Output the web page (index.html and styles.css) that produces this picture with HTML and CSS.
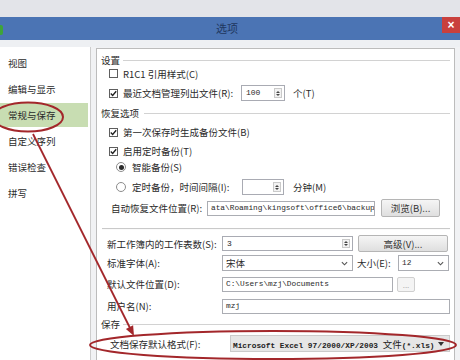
FILE: index.html
```html
<!DOCTYPE html>
<html lang="zh">
<head>
<meta charset="utf-8">
<title>选项</title>
<link rel="stylesheet" href="styles.css">
</head>
<body>
<div class="screen">
  <div class="topstrip"></div>
  <div class="titlebar">
    <span class="appicon"></span>
    <span class="title">选项</span>
    <span class="close">×</span>
  </div>
  <div class="belt"></div>
  <div class="main">
    <ul class="sidebar">
      <li>视图</li>
      <li>编辑与显示</li>
      <li class="active">常规与保存</li>
      <li>自定义序列</li>
      <li>错误检查</li>
      <li>拼写</li>
    </ul>
    <div class="panel">
      <div class="group-head head-settings">设置</div>
      <div class="row check-row r-r1c1">
        <span class="cb"></span><span>R1C1 引用样式(C)</span>
      </div>
      <div class="row check-row r-recent">
        <span class="cb on"><svg viewBox="0 0 9 9" width="7" height="7"><path d="M1 4.6 L3.4 7 L8 1.6" stroke="#1e1e1e" stroke-width="1.7" fill="none"/></svg></span>
        <span class="lbl-recent">最近文档管理列出文件(R):</span>
        <span class="spin w44"><span class="val">100</span><span class="arrows"><i class="up"></i><i class="down"></i></span></span>
        <span class="unit">个(T)</span>
      </div>
      <div class="group-head head-recover">恢复选项</div>
      <div class="row check-row r-first">
        <span class="cb on"><svg viewBox="0 0 9 9" width="7" height="7"><path d="M1 4.6 L3.4 7 L8 1.6" stroke="#1e1e1e" stroke-width="1.7" fill="none"/></svg></span>
        <span>第一次保存时生成备份文件(B)</span>
      </div>
      <div class="row check-row r-timer">
        <span class="cb on"><svg viewBox="0 0 9 9" width="7" height="7"><path d="M1 4.6 L3.4 7 L8 1.6" stroke="#1e1e1e" stroke-width="1.7" fill="none"/></svg></span>
        <span>启用定时备份(T)</span>
      </div>
      <div class="row radio-row r-smart">
        <span class="rb on"></span><span>智能备份(S)</span>
      </div>
      <div class="row radio-row r-interval">
        <span class="rb"></span>
        <span class="lbl-interval">定时备份，时间间隔(I):</span>
        <span class="spin w42"><span class="val"></span><span class="arrows"><i class="up"></i><i class="down"></i></span></span>
        <span class="unit">分钟(M)</span>
      </div>
      <div class="row r-autopath">
        <span class="lbl-auto">自动恢复文件位置(R):</span>
        <span class="field w-auto">ata\Roaming\kingsoft\office6\backup</span>
        <span class="btn w-browse">浏览(B)...</span>
      </div>
      <div class="separator"></div>
      <div class="row form-row r-sheets">
        <span class="lbl-form">新工作簿内的工作表数(S):</span>
        <span class="spin w-sheets"><span class="val">3</span><span class="arrows"><i class="up"></i><i class="down"></i></span></span>
        <span class="btn w-adv">高级(V)...</span>
      </div>
      <div class="row form-row r-font">
        <span class="lbl-form">标准字体(A):</span>
        <span class="select w-font"><span class="val cjk">宋体</span><svg class="chev" viewBox="0 0 8 5" width="7" height="5"><path d="M1 1 L4 4 L7 1" stroke="#555" stroke-width="1.3" fill="none"/></svg></span>
        <span class="lbl-size">大小(E):</span>
        <span class="select w-size"><span class="val">12</span><svg class="chev" viewBox="0 0 8 5" width="7" height="5"><path d="M1 1 L4 4 L7 1" stroke="#555" stroke-width="1.3" fill="none"/></svg></span>
      </div>
      <div class="row form-row r-default">
        <span class="lbl-form">默认文件位置(D):</span>
        <span class="field w-docs">C:\Users\mzj\Documents</span>
        <span class="btn small w-dots">...</span>
      </div>
      <div class="row form-row r-user">
        <span class="lbl-form">用户名(N):</span>
        <span class="field grow">mzj</span>
      </div>
      <div class="group-head head-save">保存</div>
      <div class="row r-format">
        <span class="lbl-format">文档保存默认格式(F):</span>
        <span class="select gray grow"><span class="val">Microsoft Excel 97/2000/XP/2003 <span class="cjk">文件</span>(*.xls)</span><svg class="tri" viewBox="0 0 6 4" width="6" height="4"><path d="M0 0 L6 0 L3 4 Z" fill="#333"/></svg></span>
      </div>
    </div>
  </div>
  <svg class="annot" viewBox="0 0 460 360" width="460" height="360">
    <ellipse cx="28" cy="117" rx="35" ry="14.5" fill="none" stroke="#a3272b" stroke-width="2"/>
    <ellipse cx="273" cy="345" rx="183" ry="14" fill="none" stroke="#a3272b" stroke-width="2"/>
    <line x1="33" y1="134" x2="130" y2="328" stroke="#a3272b" stroke-width="1.8"/>
    <polygon points="134,336 133.1,325.3 125.9,328.9" fill="#a3272b"/>
  </svg>
</div>
</body>
</html>
```

FILE: styles.css
```css
* { box-sizing: border-box; margin: 0; padding: 0; }
html, body { width: 460px; height: 360px; overflow: hidden; }
body {
  background: #fff;
  font-family: "Noto Sans CJK SC", "Liberation Sans", sans-serif;
  font-size: 9.5px;
  color: #2a2a2a;
}
.screen {
  position: relative;
  width: 460px;
  height: 360px;
  overflow: hidden;
  display: flex;
  flex-direction: column;
}
.topstrip { height: 17px; background: #e3e4e9; flex: none; }
.titlebar {
  height: 23px;
  flex: none;
  background: #4b74b4;
  display: grid;
  grid-template-columns: 1fr auto 1fr;
  align-items: center;
}
.appicon {
  justify-self: start;
  width: 12px;
  height: 10px;
  margin-left: -9px;
  margin-top: 3px;
  background: #3ea43a;
  border-radius: 2px;
}
.title {
  font-size: 11px;
  line-height: 23px;
  color: #1f375f;
  margin-right: 6px;
}
.close {
  justify-self: end;
  align-self: start;
  width: 18px;
  height: 16px;
  background: #c9403d;
  color: #fff;
  font: bold 12px/16px "Liberation Sans", sans-serif;
  text-align: center;
}
.belt { height: 7px; flex: none; background: #eef0f3; }
.main {
  flex: 1;
  min-height: 0;
  display: flex;
  background: #f1f2f4;
}
.sidebar {
  width: 91px;
  flex: none;
  border-right: 1px solid #cdcdcd;
  background: #fff;
  list-style: none;
  padding-top: 4px;
  display: flex;
  flex-direction: column;
  gap: 2px;
}
.sidebar li {
  height: 24px;
  line-height: 24px;
  padding-left: 8px;
  width: 88px;
}
.sidebar li.active { background: #c8ddb2; }

.panel {
  flex: 1;
  margin: 1px 5px 0 5px;
  border: 1px solid #bcbcbc;
  border-bottom: none;
  background: #fff;
  padding: 4px 4px 0 4px;
  display: flex;
  flex-direction: column;
}
.group-head {
  display: flex;
  align-items: center;
  height: 14px;
  line-height: 14px;
  flex: none;
}
.group-head::after {
  content: "";
  flex: 1;
  border-top: 1px solid #d2d2d2;
  margin-left: 3px;
}
.head-recover { margin-top: 5px; }
.head-recover::after { margin-left: 5px; }
.head-save { margin-top: 3px; }

.row {
  display: flex;
  align-items: center;
  flex: none;
  white-space: nowrap;
}
.check-row { padding-left: 8px; gap: 5px; height: 14px; }
.radio-row { padding-left: 15px; gap: 6px; height: 14px; }
.r-r1c1 { height: 13px; }
.r-recent { margin-top: 5px; height: 16px; }
.r-first { margin-top: 5px; }
.r-timer { margin-top: 5px; }
.r-smart { margin-top: 2px; }
.r-interval { margin-top: 5px; height: 16px; }
.r-autopath { margin-top: 4px; height: 18px; padding-left: 10px; }
.separator {
  margin-top: 11px;
  margin-left: 1px;
  height: 2px;
  border-top: 1px solid #c9c9c9;
  border-bottom: 1px solid #fafafa;
  flex: none;
}
.form-row { padding-left: 6px; height: 16px; }
.r-sheets { margin-top: 5px; height: 17px; }
.r-font { margin-top: 3px; }
.r-default { margin-top: 5px; }
.r-user { margin-top: 6px; }
.r-format { margin-top: 4px; height: 17px; padding-left: 9px; }

.cb {
  width: 9px;
  height: 9px;
  border: 1px solid #5e5e5e;
  background: #fff;
  display: inline-flex;
  align-items: center;
  justify-content: center;
  flex: none;
}
.rb {
  width: 10px;
  height: 10px;
  border: 1px solid #8c8c8c;
  border-radius: 50%;
  background: #fff;
  display: inline-flex;
  align-items: center;
  justify-content: center;
  flex: none;
}
.rb.on::after {
  content: "";
  width: 5px;
  height: 5px;
  border-radius: 50%;
  background: #2a2a2a;
}

.lbl-recent { width: 113px; }
.lbl-interval { width: 104px; }
.unit { margin-left: 3px; }
.lbl-auto { width: 96px; }
.lbl-form { width: 115px; }
.lbl-format { width: 120px; }
.lbl-size { margin-left: 4px; width: 41px; }

.spin {
  display: flex;
  align-items: stretch;
  height: 16px;
  border: 1px solid #a9abb3;
  background: #fff;
  flex: none;
}
.spin .val {
  flex: 1;
  padding-left: 4px;
  font: 8px/14px "Liberation Mono", monospace;
}
.spin .arrows {
  width: 8px;
  margin: 2px 2px;
  border: 1px solid #cacaca;
  background: #f2f2f2;
  display: flex;
  flex-direction: column;
  align-items: center;
  justify-content: center;
  gap: 1px;
}
.arrows i {
  width: 0;
  height: 0;
  border-left: 2px solid transparent;
  border-right: 2px solid transparent;
}
.arrows .up { border-bottom: 2px solid #444; }
.arrows .down { border-top: 2px solid #444; }
.w44 { width: 44px; }
.w42 { width: 42px; }
.w-sheets { width: 131px; height: 15px; }
.w-sheets .val { line-height: 13px; }

.field {
  height: 15px;
  border: 1px solid #abadb3;
  background: #fff;
  display: flex;
  align-items: center;
  padding-left: 3px;
  font-family: "Liberation Mono", monospace;
  font-size: 7.8px;
  overflow: hidden;
  flex: none;
}
.field.grow { flex: 1; }
.w-auto { width: 168px; }
.w-docs { width: 171px; }

.btn {
  height: 18px;
  border: 1px solid #b5b5b5;
  border-radius: 2px;
  background: linear-gradient(#f5f5f5, #dfdfdf);
  display: flex;
  align-items: center;
  justify-content: center;
  color: #333;
  flex: none;
}
.w-browse { width: 59px; margin-left: 6px; }
.w-adv { width: 90px; margin-left: 5px; height: 17px; }
.w-dots { width: 18px; margin-left: 4px; height: 15px; color: #b0b0b0; background: #f4f4f4; border-color: #cfcfcf; font-size: 8px; }

.select {
  height: 16px;
  border: 1px solid #abadb3;
  background: #fff;
  display: flex;
  align-items: center;
  padding: 0 4px 0 3px;
  flex: none;
}
.select .val {
  flex: 1;
  font-family: "Liberation Mono", monospace;
  font-size: 7.8px;
}
.select .val.cjk, .select .cjk {
  font-family: "Noto Sans CJK SC", sans-serif;
  font-size: 9.5px;
}
.w-font { width: 131px; }
.w-size { width: 51px; }
.select.grow { flex: 1; }
.select.gray {
  height: 17px;
  background: #e6e6e6;
  border-color: #cbcbcb;
  padding-left: 2px;
  padding-right: 5px;
}
.select.gray .val { color: #222; font-weight: bold; }
.select.gray .cjk { font-weight: normal; }

.annot {
  position: absolute;
  top: 0;
  left: 0;
  pointer-events: none;
}
```
